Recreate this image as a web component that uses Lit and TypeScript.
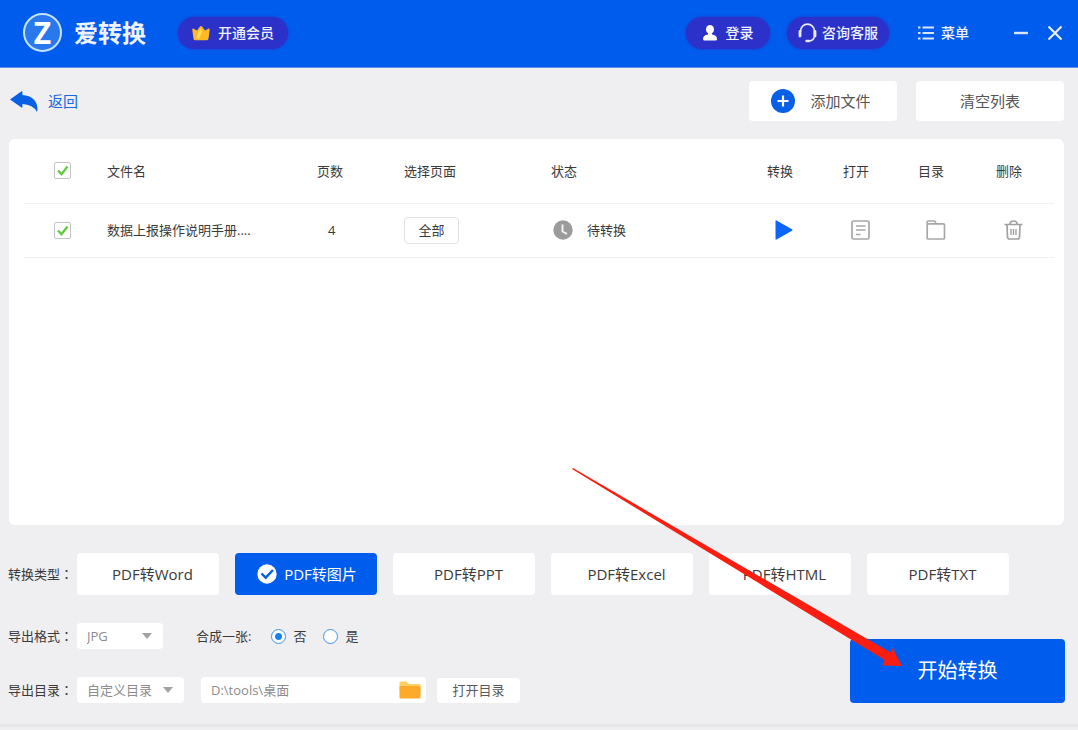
import { LitElement, html, css, svg, nothing } from "lit";
import { customElement, state } from "lit/decorators.js";

const crown = svg`<svg width="18" height="16" viewBox="0 0 18 16" aria-hidden="true"><path d="M1.200 3.600 5 5.400 8 1.400Q9 .4 10 1.400L13 5.400l3.800-1.800q1 0 .9 1.200L16.500 13.800q-.3 1.400-1.400 1.400H2.900q-1.100 0-1.400-1.400L.3 4.800q-.1-1.200.9-1.200z" fill="#ffb922"/><path d="M4 13 6 8l3-5 1 4-3 7z" fill="#ffd95c"/></svg>`;
const user = svg`<svg width="14" height="16" viewBox="0 0 14 16" aria-hidden="true"><ellipse cx="7" cy="4.4" rx="4" ry="4.4" fill="#fff"/><path d="M5 8h4v1.600q5 .6 5 4.400 0 1.500-1.600 1.500H1.600Q0 15.500 0 14q0-3.800 5-4.400z" fill="#fff"/></svg>`;
const headset = svg`<svg width="19" height="20" viewBox="0 0 19 20" fill="none" stroke="#e9eaff" aria-hidden="true"><path d="M2.600 9V8a6.900 6.900 0 0 1 13.800 0v4.500q0 5-5.400 5.500" stroke-width="1.600"/><path d="M2 8.500v4.500M17 8.500v4.500" stroke-width="2.800" stroke-linecap="round"/><path d="M8.500 18h2.500" stroke-width="2.400" stroke-linecap="round"/></svg>`;
const list = svg`<svg width="16" height="14" viewBox="0 0 16 14" stroke="#d9e6ff" stroke-width="2" aria-hidden="true"><path d="M0 1.500h2.500M4.500 1.500H16M0 7h2.500M4.500 7H16M0 12.500h2.500M4.500 12.500H16"/></svg>`;
const minus = svg`<svg width="16" height="16" viewBox="0 0 16 16" stroke="#d9e6ff" stroke-width="2.400" aria-hidden="true"><path d="M1 8h14"/></svg>`;
const cross = svg`<svg width="16" height="16" viewBox="0 0 16 16" stroke="#e6eeff" stroke-width="2.200" aria-hidden="true"><path d="M1.500 1.500l13 13M14.500 1.500l-13 13"/></svg>`;
const back = svg`<svg width="28" height="21" viewBox="0 0 28 21" fill="#0860e6" aria-hidden="true"><path d="M0 8.400 11.600.2q.8-.3.8.6V4Q27 5 27.500 18.500q0 1.500-.8 2.200Q23 13.500 12.400 13v3q0 1-.9.500z"/></svg>`;
const plus = svg`<svg width="24" height="24" viewBox="0 0 24 24" aria-hidden="true"><circle cx="12" cy="12" r="12" fill="#0860e6"/><path d="M12 6.500v11M6.500 12h11" stroke="#fff" stroke-width="2.200"/></svg>`;
const clock = svg`<svg width="20" height="20" viewBox="0 0 20 20" aria-hidden="true"><circle cx="10" cy="10" r="9.700" fill="#9b9b9b"/><path d="M9.500 4.500v7l4.500 2.500" fill="none" stroke="#f4f4f4" stroke-width="1.900"/></svg>`;
const play = svg`<svg width="18" height="20" viewBox="0 0 18 20" aria-hidden="true"><path d="M.5 1Q.5 0 1.500.5L17 9.300q1 .7 0 1.400L1.500 19.500q-1 .5-1-.5z" fill="#0a66fb"/></svg>`;
const doc = svg`<svg width="20" height="20" viewBox="0 0 20 20" fill="none" stroke="#a8a8a8" stroke-width="1.700" aria-hidden="true"><rect x="1" y="1" width="17" height="18" rx="1.500"/><path d="M5 6h9.500M5 10h9.500M5 14.500h4.500"/></svg>`;
const folderLine = svg`<svg width="20" height="20" viewBox="0 0 20 20" fill="none" stroke="#a8a8a8" stroke-width="1.700" aria-hidden="true"><path d="M1.200 18V2q0-1 1-1h5.800q.8 0 1.200.8L10.200 3.800h7.300q1 0 1 1V18q0 1-1 1H2.200q-1 0-1-1zM1.200 3.800H10"/></svg>`;
const trash = svg`<svg width="19" height="20" viewBox="0 0 19 20" fill="none" stroke="#a0a0a0" stroke-width="1.700" aria-hidden="true"><path d="M.5 4.500h18M6 4.200Q6 1 9.500 1T13 4.200M3 5l.5 12q.1 2 2 2h8q1.900 0 2-2L16 5"/><path d="M7 9v6M9.500 9v6M12 9v6" stroke-width="1.400"/></svg>`;
const tick = svg`<svg width="20" height="20" viewBox="0 0 20 20" aria-hidden="true"><circle cx="10" cy="10" r="9.700" fill="#fff"/><path d="M4.500 9.500 8.700 13.700 16 6" fill="none" stroke="#0860e6" stroke-width="2.400"/></svg>`;
const caret = svg`<svg class="caret" width="10" height="6" viewBox="0 0 10 6" aria-hidden="true"><path d="M0 0h10L5 6z" fill="#a2a2a2"/></svg>`;
const folder = svg`<svg width="22" height="18" viewBox="0 0 22 18" aria-hidden="true"><path d="M.5 2Q.5.500 2 .500h5.500L10 3h10.500q1 0 1 1v5H.5z" fill="#fecf62"/><rect x=".500" y="5" width="21" height="12.500" rx="1" fill="#fea92a"/></svg>`;
const pointer = svg`<svg class="pointer" width="330" height="198" viewBox="572 468 330 198" aria-hidden="true"><path d="M572 469 573 468 890.500 652.500 892.500 648 902 666 882.500 665.500 884.500 660z" fill="#fb1d10"/></svg>`;

const TYPES = ["PDF转Word", "PDF转图片", "PDF转PPT", "PDF转Excel", "PDF转HTML", "PDF转TXT"];

@customElement("app-root")
export class AppRoot extends LitElement {
  @state() private type = "PDF转图片";

  static styles = css`
    :host {
      display: flex;
      flex-direction: column;
      min-height: 100vh;
      box-sizing: border-box;
      background: #efeff1;
      border-bottom: 3px solid #efeff1;
      overflow: hidden;
      color: #3a3a3a;
      font-family: "Open Sans", "Noto Sans CJK SC", sans-serif;
      font-size: 13px;
      line-height: 20px;
    }
    * { box-sizing: border-box; }
    svg { display: block; flex: none; }
    button, input, select { font: inherit; color: inherit; margin: 0; }
    button { border: 0; padding: 0; background: none; cursor: pointer; white-space: nowrap; }

    .header {
      display: flex;
      align-items: center;
      height: 68px;
      padding: 0 15px 2px 23px;
      background: #005cec;
      border-bottom: 1px solid #5b93ea;
      color: #eef3ff;
      font-size: 14px;
    }
    .logo {
      display: flex;
      align-items: center;
      justify-content: center;
      width: 39px;
      height: 39px;
      border: 2px solid #c3e3ff;
      border-radius: 50%;
      background: #2a78ee;
      color: #fff;
      font-family: "Noto Sans", sans-serif;
      font-size: 30px;
      line-height: 36px;
      font-weight: 700;
    }
    .brand { margin: 0 32px 0 12px; font-size: 24px; line-height: 36px; font-weight: 700; }
    .pill {
      display: flex;
      align-items: center;
      justify-content: center;
      height: 32px;
      border-radius: 16px;
      background: #2c31c9;
      box-shadow: 0 0 3px #2c31c9;
      font-weight: 500;
    }
    .vip { width: 110px; gap: 8px; }
    .login { width: 84px; gap: 9px; margin-left: auto; }
    .service { width: 102px; gap: 5px; margin-left: 17px; }
    .menu { display: flex; align-items: center; gap: 7px; margin: 0 44px 0 29px; font-weight: 500; }
    .close { margin-left: 18px; }

    .toolbar { display: flex; align-items: center; gap: 19px; padding: 13px 14px 18px 10px; }
    .back {
      display: flex;
      align-items: center;
      gap: 10px;
      margin-right: auto;
      color: #1767e4;
      font-size: 15px;
    }
    .tool {
      display: flex;
      align-items: center;
      justify-content: center;
      gap: 15px;
      width: 148px;
      height: 40px;
      border-radius: 4px;
      background: #fff;
      color: #555;
      font-size: 15px;
    }
    .add { padding-right: 4px; }

    .card {
      flex: 1;
      margin: 0 14px 0 9px;
      padding: 0 10px 0 15px;
      border-radius: 6px;
      background: #fff;
    }
    .table { width: 100%; table-layout: fixed; border-collapse: collapse; }
    .table th, .table td { padding: 0; text-align: left; font-weight: 400; border-bottom: 1px solid #f0f0f0; }
    .table th { height: 64px; }
    .table td { height: 54px; }
    .c-check { width: 83px; }
    .c-name { width: 210px; }
    .c-pages { width: 87px; }
    .c-range { width: 147px; }
    .c-state { width: 216px; }
    .c-run { width: 76px; }
    .c-open { width: 75px; }
    .c-dir { width: 78px; }
    .c-del { width: 58px; }
    .check {
      display: block;
      appearance: none;
      width: 17px;
      height: 17px;
      margin-left: 30px;
      border: 1px solid #c4c4c4;
      border-radius: 2px;
      background: #fff;
    }
    .check:checked {
      background: #fff url("data:image/svg+xml,%3Csvg xmlns='http://www.w3.org/2000/svg' viewBox='0 0 15 15'%3E%3Cpath d='M3 7.500l3.500 3.700L12.500 3.500' fill='none' stroke='%235fcb3a' stroke-width='2.200'/%3E%3C/svg%3E") center / 15px 15px no-repeat;
    }
    .table .count { padding-left: 11px; }
    .range { display: block; width: 55px; height: 27px; border: 1px solid #e2e2e2; border-radius: 4px; background: #fff; }
    .status { display: flex; align-items: center; gap: 14px; padding-left: 2px; }
    .icon { display: block; margin-left: 8px; }

    .panel { padding: 28px 13px 21px 8px; border-bottom: 3px solid #e6e7ea; }
    .line { display: flex; align-items: center; }
    .label { flex: none; width: 69px; white-space: nowrap; }
    .colon { font-family: "Noto Sans CJK TC", sans-serif; }
    .types { display: flex; gap: 16px; }
    .type {
      display: flex;
      align-items: center;
      justify-content: center;
      gap: 7px;
      width: 142px;
      height: 42px;
      padding-left: 9px;
      border-radius: 4px;
      background: #fff;
      font-size: 15px;
    }
    .type.on { background: #005cec; color: #fff; padding-left: 2px; }
    .lower { display: flex; align-items: flex-end; justify-content: space-between; margin-top: 28px; }
    .options { display: flex; flex-direction: column; gap: 28px; }
    .select { position: relative; display: block; }
    .select select {
      display: block;
      appearance: none;
      width: 100%;
      height: 26px;
      padding: 0 10px;
      border: 0;
      border-radius: 4px;
      background: #fff;
      color: #8c8c8c;
    }
    .caret { position: absolute; right: 11px; top: 10px; pointer-events: none; }
    .format { width: 86px; }
    .folder { width: 107px; }
    .merge { margin: 0 20px 0 33px; }
    .choice { display: flex; align-items: center; gap: 7px; margin-right: 17px; }
    .radio {
      appearance: none;
      width: 15px;
      height: 15px;
      border: 1px solid #3d93ec;
      border-radius: 50%;
      background: #fff;
    }
    .radio:checked { background: radial-gradient(circle, #1a80ee 3px, #fff 4px); }
    .path {
      display: flex;
      align-items: center;
      width: 225px;
      height: 26px;
      margin: 0 11px 0 17px;
      padding: 0 5px 0 10px;
      border-radius: 4px;
      background: #fff;
    }
    .path input { flex: 1; min-width: 0; padding: 0; border: 0; background: none; color: #8c8c8c; outline: 0; }
    .open { width: 83px; height: 25px; border-radius: 4px; background: #fff; color: #5a5a5a; }
    .go { position: relative; }
    .start {
      display: block;
      width: 215px;
      height: 64px;
      border-radius: 4px;
      background: #005cec;
      color: #fff;
      font-size: 20px;
    }
    .pointer { position: absolute; right: 163px; bottom: 37px; pointer-events: none; }
  `;

  render() {
    const colon = html`<span class="colon">：</span>`;
    return html`
      <header class="header">
        <span class="logo">Z</span>
        <span class="brand">爱转换</span>
        <button class="pill vip">${crown}开通会员</button>
        <button class="pill login">${user}登录</button>
        <button class="pill service">${headset}咨询客服</button>
        <button class="menu">${list}菜单</button>
        <button aria-label="最小化">${minus}</button>
        <button class="close" aria-label="关闭">${cross}</button>
      </header>

      <nav class="toolbar">
        <button class="back">${back}返回</button>
        <button class="tool add">${plus}添加文件</button>
        <button class="tool">清空列表</button>
      </nav>

      <main class="card">
        <table class="table">
          <thead>
            <tr>
              <th class="c-check"><input class="check" type="checkbox" aria-label="全选" checked /></th>
              <th class="c-name">文件名</th>
              <th class="c-pages">页数</th>
              <th class="c-range">选择页面</th>
              <th class="c-state">状态</th>
              <th class="c-run">转换</th>
              <th class="c-open">打开</th>
              <th class="c-dir">目录</th>
              <th class="c-del">删除</th>
            </tr>
          </thead>
          <tbody>
            <tr>
              <td><input class="check" type="checkbox" aria-label="选择文件" checked /></td>
              <td>数据上报操作说明手册....</td>
              <td class="count">4</td>
              <td><button class="range">全部</button></td>
              <td><span class="status">${clock}待转换</span></td>
              <td><button class="icon" aria-label="转换">${play}</button></td>
              <td><button class="icon" aria-label="打开">${doc}</button></td>
              <td><button class="icon" aria-label="目录">${folderLine}</button></td>
              <td><button class="icon" aria-label="删除">${trash}</button></td>
            </tr>
          </tbody>
        </table>
      </main>

      <section class="panel">
        <div class="line">
          <span class="label">转换类型${colon}</span>
          <div class="types">
            ${TYPES.map(
              (t) => html`<button class="type ${t === this.type ? "on" : ""}" @click=${() => (this.type = t)}>
                ${t === this.type ? tick : nothing}${t}
              </button>`
            )}
          </div>
        </div>
        <div class="lower">
          <div class="options">
            <div class="line">
              <label class="label" for="format">导出格式${colon}</label>
              <span class="select format">
                <select id="format"><option>JPG</option></select>${caret}
              </span>
              <span class="merge">合成一张:</span>
              <label class="choice"><input class="radio" type="radio" name="merge" checked />否</label>
              <label class="choice"><input class="radio" type="radio" name="merge" />是</label>
            </div>
            <div class="line">
              <label class="label" for="folder">导出目录${colon}</label>
              <span class="select folder">
                <select id="folder"><option>自定义目录</option></select>${caret}
              </span>
              <span class="path">
                <input type="text" aria-label="导出目录路径" .value=${"D:\\tools\\桌面"} />
                <button aria-label="浏览">${folder}</button>
              </span>
              <button class="open">打开目录</button>
            </div>
          </div>
          <div class="go">
            <button class="start">开始转换</button>
            ${pointer}
          </div>
        </div>
      </section>
    `;
  }
}
